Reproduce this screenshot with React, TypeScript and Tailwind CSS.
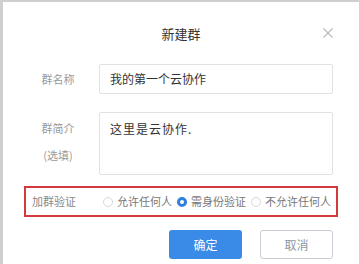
const font = { fontFamily: '"Noto Sans CJK SC", "Noto Sans", sans-serif' }

function Radio({ checked, label }: { checked?: boolean; label: string }) {
  return (
    <label className="flex items-center gap-[4px] shrink-0 whitespace-nowrap">
      {checked ? (
        <span className="w-[10px] h-[10px] rounded-full border-[3px] border-[#2f80e0] bg-white shrink-0" />
      ) : (
        <span className="w-[10px] h-[10px] rounded-full border border-[#d8d8d8] bg-white shrink-0" />
      )}
      <span className="text-[11px] leading-none text-[#777]">{label}</span>
    </label>
  )
}

export default function App() {
  return (
    <div
      className="w-[359px] h-[264px] bg-white border-l-[3px] border-t-2 border-[#cfcfcf] overflow-hidden"
      style={font}
    >
      {/* header */}
      <div className="h-[62px] grid grid-cols-[1fr_auto_1fr] items-center">
        <div />
        <h1 className="text-[13px] text-[#333] leading-none">新建群</h1>
        <div className="flex justify-end pr-[26px]">
          <svg width="10" height="10" viewBox="0 0 10 10" className="text-[#bbb]">
            <path d="M0.5 0.5 L9.5 9.5 M9.5 0.5 L0.5 9.5" stroke="currentColor" strokeWidth="1.2" />
          </svg>
        </div>
      </div>

      {/* name */}
      <div className="flex items-center h-[30px]">
        <span className="ml-[17px] w-[76px] text-center text-[11px] text-[#999]">群名称</span>
        <div className="ml-[3px] w-[234px] h-[30px] border border-[#e2e2e2] rounded-[2px] flex items-center px-[10px] text-[12px] text-[#333]">
          我的第一个云协作
        </div>
      </div>

      {/* intro */}
      <div className="flex mt-[18px]">
        <div className="ml-[17px] w-[76px] flex flex-col items-center text-[11px] text-[#999] leading-none">
          <span className="mt-[11px]">群简介</span>
          <span className="mt-[16px]">(选填)</span>
        </div>
        <div className="ml-[3px] w-[234px] h-[63px] border border-[#e2e2e2] rounded-[2px] px-[10px] pt-[7px] text-[12px] text-[#333] tracking-[1px]">
          这里是云协作.
        </div>
      </div>

      {/* verify */}
      <div className="ml-[21px] mt-[11px] w-[314px] h-[31px] border-2 border-[#d33a3f] flex items-center pl-[6px] whitespace-nowrap">
        <span className="w-[71px] shrink-0 text-[11px] text-[#888]">加群验证</span>
        <div className="flex items-center gap-[5px]">
          <Radio label="允许任何人" />
          <Radio checked label="需身份验证" />
          <Radio label="不允许任何人" />
        </div>
      </div>

      {/* buttons */}
      <div className="flex justify-end gap-[18px] pr-[26px] mt-[13px]">
        <button className="w-[73px] h-[29px] rounded-[3px] bg-[#3a8ae8] text-white text-[12px]">确定</button>
        <button className="w-[73px] h-[29px] rounded-[3px] border border-[#c9ced6] bg-white text-[#8d96a3] text-[12px]">取消</button>
      </div>
    </div>
  )
}
